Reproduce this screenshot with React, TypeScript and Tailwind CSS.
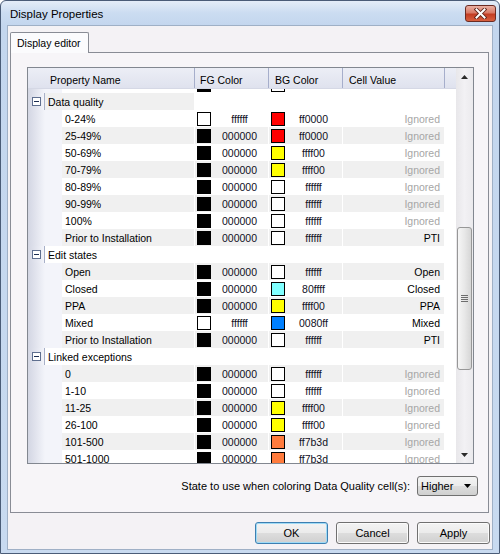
import React from "react";

interface Item {
  name: string;
  fg: string;
  bg: string;
  value: string;
}

interface Group {
  title: string;
  items: Item[];
}

const groups: Group[] = [
  {
    title: "Data quality",
    items: [
      { name: "0-24%", fg: "ffffff", bg: "ff0000", value: "Ignored" },
      { name: "25-49%", fg: "000000", bg: "ff0000", value: "Ignored" },
      { name: "50-69%", fg: "000000", bg: "ffff00", value: "Ignored" },
      { name: "70-79%", fg: "000000", bg: "ffff00", value: "Ignored" },
      { name: "80-89%", fg: "000000", bg: "ffffff", value: "Ignored" },
      { name: "90-99%", fg: "000000", bg: "ffffff", value: "Ignored" },
      { name: "100%", fg: "000000", bg: "ffffff", value: "Ignored" },
      { name: "Prior to Installation", fg: "000000", bg: "ffffff", value: "PTI" },
    ],
  },
  {
    title: "Edit states",
    items: [
      { name: "Open", fg: "000000", bg: "ffffff", value: "Open" },
      { name: "Closed", fg: "000000", bg: "80ffff", value: "Closed" },
      { name: "PPA", fg: "000000", bg: "ffff00", value: "PPA" },
      { name: "Mixed", fg: "ffffff", bg: "0080ff", value: "Mixed" },
      { name: "Prior to Installation", fg: "000000", bg: "ffffff", value: "PTI" },
    ],
  },
  {
    title: "Linked exceptions",
    items: [
      { name: "0", fg: "000000", bg: "ffffff", value: "Ignored" },
      { name: "1-10", fg: "000000", bg: "ffffff", value: "Ignored" },
      { name: "11-25", fg: "000000", bg: "ffff00", value: "Ignored" },
      { name: "26-100", fg: "000000", bg: "ffff00", value: "Ignored" },
      { name: "101-500", fg: "000000", bg: "ff7b3d", value: "Ignored" },
      { name: "501-1000", fg: "000000", bg: "ff7b3d", value: "Ignored" },
    ],
  },
];

function Swatch({ color }: { color: string }) {
  return (
    <div
      className="mt-[2px] ml-[2px] h-[14px] w-[14px] shrink-0 border border-black"
      style={{ backgroundColor: `#${color}` }}
    />
  );
}

function RowHeader({ w }: { w: string }) {
  return <div className={`${w} shrink-0 bg-linear-to-r from-[#d3d6e3] to-[#f3f4fa]`} />;
}

function ItemRow({ item, idx, hideText }: { item: Item; idx: number; hideText?: boolean }) {
  const bg = idx % 2 === 0 ? "bg-[#f0f0f0]" : "bg-white";
  const ignored = item.value === "Ignored";
  return (
    <div className="flex h-[17px] leading-[18px]">
      <RowHeader w="w-[17px]" />
      <div className="w-[17px] shrink-0 bg-[#f3f4fa]" />
      <div className={`mr-px w-[132px] shrink-0 pl-[3px] whitespace-nowrap ${bg}`}>{hideText ? "" : item.name}</div>
      <div className={`mr-px flex w-[73px] shrink-0 ${bg}`}>
        <Swatch color={item.fg} />
        <div className="flex-1 text-center text-[#10101e]">{hideText ? "" : item.fg}</div>
      </div>
      <div className={`mr-px flex w-[73px] shrink-0 ${bg}`}>
        <Swatch color={item.bg} />
        <div className="flex-1 text-center text-[#10101e]">{hideText ? "" : item.bg}</div>
      </div>
      <div className={`mr-px w-[101px] shrink-0 pr-[4px] text-right ${bg} ${ignored ? "text-[#a6a6a6]" : "text-black"}`}>
        {hideText ? "" : item.value}
      </div>
      <div className="flex-1 bg-white" />
    </div>
  );
}

function GroupRow({ title, idx }: { title: string; idx: number }) {
  const bg = idx % 2 === 0 ? "bg-[#f0f0f0]" : "bg-white";
  return (
    <div className="flex h-[17px] leading-[18px]">
      <div className="flex w-[16px] shrink-0 items-center bg-linear-to-r from-[#d3d6e3] to-[#f3f4fa] pl-[4px]">
        <div className="flex h-[9px] w-[9px] items-center justify-center border border-[#5f6f8f] bg-white">
          <div className="h-px w-[5px] bg-[#1c2d52]" />
        </div>
      </div>
      <div className="w-px shrink-0 bg-[#a8b0c8]" />
      <div className={`mr-px w-[149px] shrink-0 pl-[3px] whitespace-nowrap ${bg}`}>{title}</div>
      <div className="flex-1 bg-white" />
    </div>
  );
}

function HeaderCell({ w, label, pl }: { w: string; label?: string; pl: string }) {
  return (
    <div className={`${w} ${pl} shrink-0 border-r border-[#a6aecb] pt-[3px] leading-[18px] whitespace-nowrap`}>
      {label}
    </div>
  );
}

function ScrollBar() {
  return (
    <div className="flex w-[17px] shrink-0 flex-col bg-linear-to-r from-[#e8e7ea] via-[#f2f1f4] to-[#ebeaed]">
      <div className="flex h-[17px] items-center justify-center">
        <svg width="7" height="4" viewBox="0 0 7 4">
          <path d="M3.5 0 L7 4 L0 4 Z" fill="#2a2a2a" />
        </svg>
      </div>
      <div className="h-[142px]" />
      <div className="mx-px flex h-[143px] items-center justify-center rounded-[3px] border border-[#979797] bg-linear-to-r from-[#f6f6f6] via-[#e8e8e8] to-[#d6d6d6]">
        <div className="flex flex-col gap-px">
          <div className="h-px w-[7px] bg-[#6d6d6d]" />
          <div className="h-px w-[7px] bg-[#6d6d6d]" />
          <div className="h-px w-[7px] bg-[#6d6d6d]" />
          <div className="h-px w-[7px] bg-[#6d6d6d]" />
        </div>
      </div>
      <div className="flex-1" />
      <div className="flex h-[17px] items-center justify-center">
        <svg width="7" height="4" viewBox="0 0 7 4">
          <path d="M0 0 L7 0 L3.5 4 Z" fill="#2a2a2a" />
        </svg>
      </div>
    </div>
  );
}

function PushButton({ label, isDefault }: { label: string; isDefault?: boolean }) {
  return (
    <button
      className={`h-[22px] w-[73px] rounded-[3px] border bg-[linear-gradient(to_bottom,#f3f3f3_0%,#ebebeb_50%,#dddddd_50%,#d0d0d0_100%)] text-[11px] text-black ${
        isDefault
          ? "border-[#3c7fb1] shadow-[inset_0_0_0_1px_#9fdbf6]"
          : "border-[#707070] shadow-[inset_0_0_0_1px_#fbfbfb]"
      }`}
    >
      {label}
    </button>
  );
}

export default function App() {
  let idx = 0;
  const rows: React.ReactNode[] = [];
  groups.forEach((g) => {
    rows.push(<GroupRow key={g.title} title={g.title} idx={idx} />);
    idx++;
    g.items.forEach((item) => {
      rows.push(<ItemRow key={g.title + item.name} item={item} idx={idx} />);
      idx++;
    });
  });

  return (
    <div className="h-[554px] w-[500px] font-['Liberation_Sans',Arial,sans-serif] text-[11px] text-black">
      <div className="flex h-full flex-col rounded-t-[6px] border border-[#4a5c77] bg-[linear-gradient(to_bottom,#e4edf8_0px,#cbdcf1_12px,#c3d6ee_25px,#c8daf0_100%)] pb-[3px]">
        {/* title bar */}
        <div className="flex h-[24px] shrink-0 items-start justify-between pr-[3px] pl-[9px]">
          <span className="pt-[6px] text-[11.5px] leading-[14px] text-black">Display Properties</span>
          <div className="mt-[4px] flex h-[17px] w-[31px] items-center justify-center rounded-[3px] border border-[#6b2b22] bg-[linear-gradient(to_bottom,#eab0a3_0%,#d97a66_45%,#c33c22_55%,#d8603f_100%)]">
            <svg width="13" height="11" viewBox="0 0 13 11">
              <path d="M2.5 1.5 L10.5 9.5 M10.5 1.5 L2.5 9.5" stroke="#5e2419" strokeWidth="3.8" strokeLinecap="square" />
              <path d="M2.5 1.5 L10.5 9.5 M10.5 1.5 L2.5 9.5" stroke="#ffffff" strokeWidth="2" strokeLinecap="square" />
            </svg>
          </div>
        </div>

        {/* client area */}
        <div className="mx-[6px] flex flex-1 flex-col border border-[#9fb0c6] bg-[#f4f2f5]">
          {/* tab strip */}
          <div className="mt-[6px] ml-[2px] flex">
            <div className="relative z-10 -mb-px h-[21px] w-[79px] rounded-t-[2px] border-x border-t border-[#898c95] bg-[#fbfbfd] pl-[6px] text-[10.5px] leading-[20px]">
              Display editor
            </div>
          </div>

          {/* tab panel */}
          <div className="mr-[3px] ml-[2px] flex h-[461px] flex-col border border-[#898c95] bg-[#f7f5f8]">
            {/* grid */}
            <div className="mt-[14px] mr-[14px] ml-[16px] flex h-[397px] border border-[#828790] bg-white text-[10.5px]">
              <div className="flex w-[428px] flex-col">
                <div className="flex h-[21px] shrink-0 border-b border-[#d5d8e5] bg-linear-to-b from-[#eceef6] to-[#dfe2ee]">
                  <HeaderCell w="w-[167px]" pl="pl-[22px]" label="Property Name" />
                  <HeaderCell w="w-[74px]" pl="pl-[5px]" label="FG Color" />
                  <HeaderCell w="w-[74px]" pl="pl-[6px]" label="BG Color" />
                  <HeaderCell w="w-[102px]" pl="pl-[6px]" label="Cell Value" />
                  <div className="flex-1" />
                </div>
                <div className="h-[374px] overflow-hidden">
                  <div className="-mt-[13px]">
                    <ItemRow item={{ name: "", fg: "000000", bg: "ffffff", value: "" }} idx={-1} hideText />
                    {rows}
                  </div>
                </div>
              </div>
              <ScrollBar />
            </div>

            {/* state selector */}
            <div className="mt-[12px] mr-[10px] flex items-center justify-end gap-[7px]">
              <span className="text-[11px]">State to use when coloring Data Quality cell(s):</span>
              <div className="flex h-[20px] w-[61px] items-center justify-between rounded-[3px] border border-[#707070] bg-[linear-gradient(to_bottom,#f3f3f3_0%,#ebebeb_50%,#dddddd_50%,#d0d0d0_100%)] pr-[6px] pl-[3px]">
                <span>Higher</span>
                <svg width="7" height="4" viewBox="0 0 7 4">
                  <path d="M0 0 L7 0 L3.5 4 Z" fill="#000000" />
                </svg>
              </div>
            </div>
          </div>

          {/* buttons */}
          <div className="mt-[9px] flex justify-end gap-[8px] pr-[2px]">
            <PushButton label="OK" isDefault />
            <PushButton label="Cancel" />
            <PushButton label="Apply" />
          </div>
        </div>
      </div>
    </div>
  );
}
